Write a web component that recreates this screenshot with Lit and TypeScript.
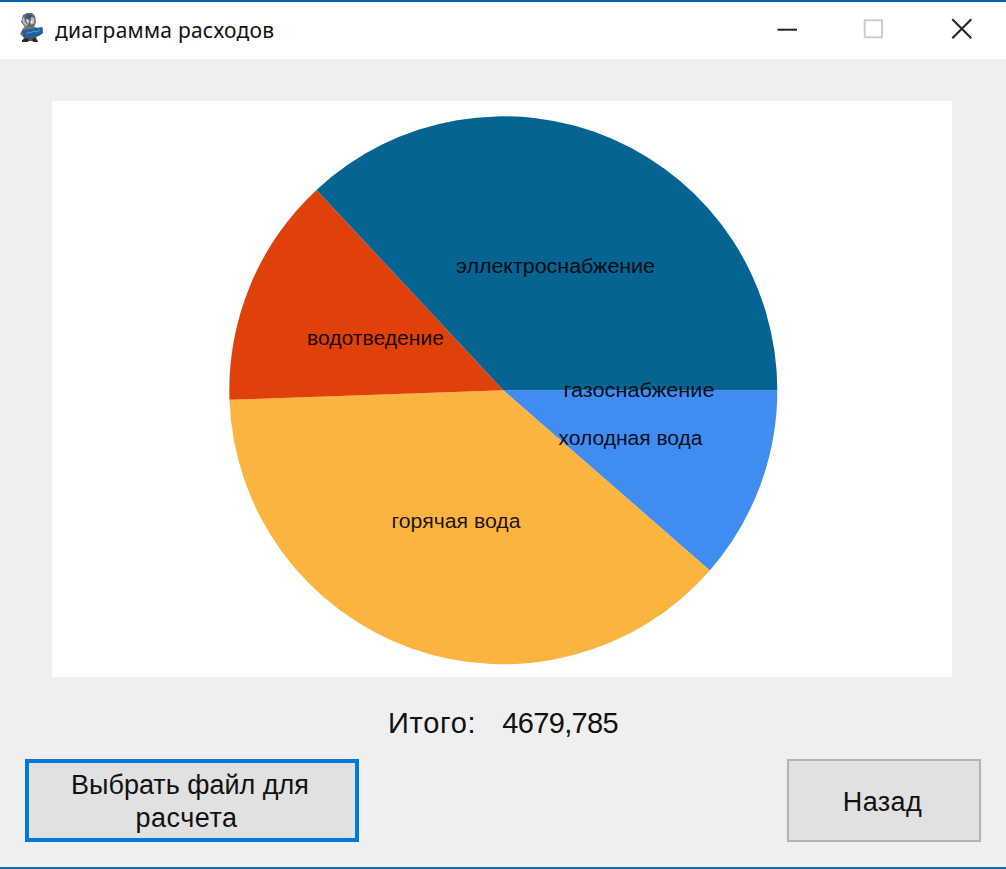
import { LitElement, html, svg, css } from "lit";
import { customElement } from "lit/decorators.js";

interface Slice {
  label: string;
  from: number;
  to: number;
  color: string;
  x: number;
  y: number;
  width: number;
}

const CX = 451.3;
const CY = 289.3;
const R = 274;

// Angles in degrees, clockwise from three o'clock.
const SLICES: Slice[] = [
  { label: "холодная вода", from: 0, to: 41.1, color: "#418cf0", x: 506.5, y: 344, width: 144 },
  { label: "горячая вода", from: 41.1, to: 178, color: "#fcb441", x: 339.5, y: 426.5, width: 129 },
  { label: "водотведение", from: 178, to: 227, color: "#e0400a", x: 255, y: 244, width: 137 },
  { label: "эллектроснабжение", from: 227, to: 360, color: "#056492", x: 404, y: 171.5, width: 199 },
  { label: "газоснабжение", from: 360, to: 360, color: "#bfbfbf", x: 511.5, y: 296, width: 151 },
];

const point = (deg: number) => {
  const a = (deg * Math.PI) / 180;
  return `${(CX + R * Math.cos(a)).toFixed(2)} ${(CY + R * Math.sin(a)).toFixed(2)}`;
};

@customElement("expense-pie")
export class ExpensePie extends LitElement {
  static styles = css`
    :host { display: block; width: 900px; height: 576px; background: #fff; }
    svg { display: block; }
    .label { font: 20.5px "Liberation Sans", Arial, sans-serif; fill: #000; fill-opacity: 0.9; }
  `;

  render() {
    return html`<svg width="900" height="576" viewBox="0 0 900 576">
      ${SLICES.filter((s) => s.to > s.from).map(
        (s) => svg`<path fill=${s.color} d="M${CX} ${CY}L${point(s.from)}A${R} ${R} 0 0 1 ${point(s.to)}Z"></path>`
      )}
      ${SLICES.map(
        (s) => svg`<text class="label" x=${s.x} y=${s.y} textLength=${s.width} lengthAdjust="spacingAndGlyphs">${s.label}</text>`
      )}
    </svg>`;
  }
}

@customElement("app-root")
export class AppRoot extends LitElement {
  static styles = css`
    :host {
      display: flex;
      flex-direction: column;
      box-sizing: border-box;
      width: 1006px;
      height: 869px;
      background: #efefef;
      border-top: 2px solid #0063b1;
      border-bottom: 2px solid #1a6fb5;
      font-family: "Liberation Sans", Arial, sans-serif;
      color: #111;
      overflow: hidden;
    }
    .titlebar {
      display: flex;
      align-items: center;
      height: 57px;
      flex: none;
      background: #fff;
      padding-left: 19px;
    }
    .logo { display: block; margin-bottom: 4px; }
    .title {
      flex: 1;
      margin-left: 11px;
      padding-bottom: 2px;
      font: 21px/28px "Noto Sans", "Open Sans", sans-serif;
      letter-spacing: 0.24px;
      white-space: nowrap;
    }
    .controls { display: block; }
    expense-pie { flex: none; margin: 42px 0 0 52px; }
    .total {
      display: flex;
      gap: 26px;
      margin: 29px 0 0 388px;
      font-size: 29px;
      line-height: 34px;
      height: 34px;
    }
    .caption { letter-spacing: 0.7px; }
    .sum { letter-spacing: -0.65px; }
    .actions {
      display: flex;
      justify-content: space-between;
      margin: 19px 25px 0;
    }
    .btn {
      box-sizing: border-box;
      height: 83px;
      margin: 0;
      border-radius: 0;
      border: 2px solid #b3b3b3;
      background: #e1e1e1;
      color: #111;
      font: 27px/33px "Liberation Sans", Arial, sans-serif;
    }
    .choose { width: 334px; padding: 3px 22px 0 18px; border: 4px solid #0078d7; }
    .second { padding-right: 7px; letter-spacing: 0.5px; }
    .back { width: 194px; padding: 4px 3px 0 0; letter-spacing: 0.4px; }
  `;

  render() {
    return html`
      <div class="titlebar">
        <svg class="logo" width="25" height="31" viewBox="0 0 25 31">
          <path fill="#626a70" d="M4 2 8 0h5l3 3 1 6-2 5H6L2 9Z"></path>
          <path fill="#b9bec2" d="M3 7 5 4l1 5 3 3-2 1-3-3ZM12 4l3 1 .5 5-3 2Z"></path>
          <path fill="#33567a" d="M7 2 11 1l2 2-2 3-4-1Z"></path>
          <path fill="#dce3e8" d="m7 7 2-1 1 3-1 2ZM12 7l2 1-1 3-2-1Z"></path>
          <path fill="#7d7770" d="m1 21 4-7h12l3 5-2 5H4Z"></path>
          <path fill="#55524e" d="M5 23h12l1 5H4Z"></path>
          <path fill="#2b2b2b" d="M3 27l5-2 2 2-1 2H3ZM13 26l3-1 3 3v1h-5Z"></path>
          <path fill="#215f9f" d="M3 17 23.500 14l.5 6-4 3-14 2-2-2Z"></path>
          <path fill="none" stroke="#5f9bcc" stroke-width="1" d="m7 21 3-2 1 1 4-2 2 1 4-2"></path>
        </svg>
        <span class="title">диаграмма расходов</span>
        <svg class="controls" width="229" height="57" viewBox="777 2 229 57">
          <path stroke="#222" stroke-width="2" d="M777.5 29.7h19.5"></path>
          <rect x="864.700" y="20.3" width="17.3" height="17" fill="none" stroke="#ccc" stroke-width="2"></rect>
          <path stroke="#222" stroke-width="2" d="m952.300 19.300 19 19m0-19-19 19"></path>
        </svg>
      </div>
      <expense-pie></expense-pie>
      <div class="total"><span class="caption">Итого:</span><span class="sum">4679,785</span></div>
      <div class="actions">
        <button class="btn choose">Выбрать файл для<br /><span class="second">расчета</span></button>
        <button class="btn back">Назад</button>
      </div>
    `;
  }
}
